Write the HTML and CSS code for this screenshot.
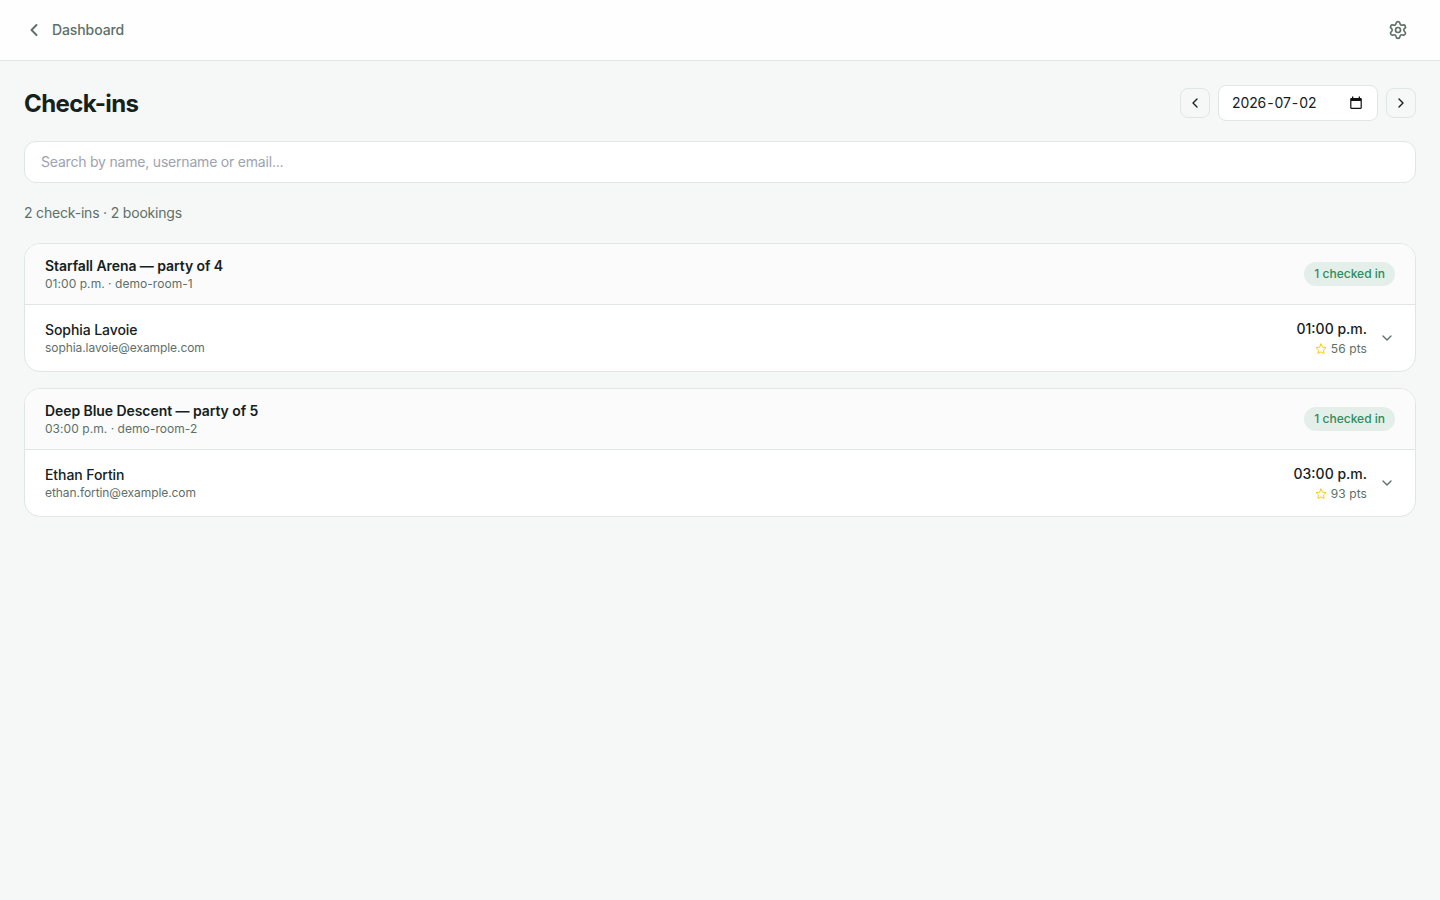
FILE: index.html
```html
<!DOCTYPE html>
<html lang="en">
<head>
	<meta charset="utf-8">
	<meta name="viewport" content="width=device-width,initial-scale=1.0">
	<title>Check-ins</title>
	<link rel="stylesheet" href="styles.css">
</head>
<body>
	<!-- top bar -->
	<header class="topbar">
		<a class="back" href="#">
			<svg width="20" height="20" viewBox="0 0 24 24"><path d="m15 18-6-6 6-6"/></svg>
			<span>Dashboard</span>
		</a>
		<button class="settings" aria-label="Settings">
			<svg width="20" height="20" viewBox="0 0 24 24"><path d="M9.671 4.136a2.34 2.34 0 0 1 4.659 0 2.34 2.34 0 0 0 3.319 1.915 2.34 2.34 0 0 1 2.33 4.033 2.34 2.34 0 0 0 0 3.831 2.34 2.34 0 0 1-2.33 4.033 2.34 2.34 0 0 0-3.319 1.915 2.34 2.34 0 0 1-4.659 0 2.34 2.34 0 0 0-3.32-1.915 2.34 2.34 0 0 1-2.33-4.033 2.34 2.34 0 0 0 0-3.831A2.34 2.34 0 0 1 6.35 6.051a2.34 2.34 0 0 0 3.319-1.915"/><circle cx="12" cy="12" r="3"/></svg>
		</button>
	</header>
	<main>
		<!-- title, date picker -->
		<div class="title-row">
			<h1>Check-ins</h1>
			<div class="date-nav">
				<button class="date-step" aria-label="Previous day">
					<svg width="16" height="16" viewBox="0 0 24 24"><path d="m15 18-6-6 6-6"/></svg>
				</button>
				<button class="date-field">
					<span class="date-value"><span>2026</span><span>-</span><span>07</span><span>-</span><span>02</span></span>
					<svg class="calendar" width="14" height="14" viewBox="0 0 14 14"><path d="M3 .5h1.3V2h5.4V.5H11V2h.6c.7 0 1.2.5 1.2 1.2v8.6c0 .7-.5 1.2-1.2 1.2H2.4c-.7 0-1.2-.5-1.2-1.2V3.2C1.2 2.5 1.7 2 2.4 2H3zM2.4 5v6.800h9.200V5z"/></svg>
				</button>
				<button class="date-step" aria-label="Next day">
					<svg width="16" height="16" viewBox="0 0 24 24"><path d="m9 18 6-6-6-6"/></svg>
				</button>
			</div>
		</div>
		<input class="search" type="text" placeholder="Search by name, username or email...">
		<p class="summary">2 check-ins · 2 bookings</p>

		<!-- bookings -->
		<section class="booking">
			<div class="booking-head">
				<div>
					<h2>Starfall Arena — party of 4</h2>
					<p class="sub">01:00 p.m. · demo-room-1</p>
				</div>
				<span class="badge">1 checked in</span>
			</div>
			<div class="guest">
				<div>
					<p class="name">Sophia Lavoie</p>
					<p class="sub email">sophia.lavoie@example.com</p>
				</div>
				<div class="guest-side">
					<div class="guest-info">
						<p class="time">01:00 p.m.</p>
						<p class="points">
							<svg class="star" width="12" height="12" viewBox="0 0 24 24"><path d="m12 2 3.090 6.260L22 9.270l-5 4.870 1.180 6.880L12 17.770l-6.180 3.250L7 14.140 2 9.270l6.910-1.010z"/></svg>
							<span>56 pts</span>
						</p>
					</div>
					<svg class="chevron" width="16" height="16" viewBox="0 0 24 24"><path d="m6 9 6 6 6-6"/></svg>
				</div>
			</div>
		</section>
		<section class="booking">
			<div class="booking-head">
				<div>
					<h2>Deep Blue Descent — party of 5</h2>
					<p class="sub">03:00 p.m. · demo-room-2</p>
				</div>
				<span class="badge">1 checked in</span>
			</div>
			<div class="guest">
				<div>
					<p class="name">Ethan Fortin</p>
					<p class="sub email">ethan.fortin@example.com</p>
				</div>
				<div class="guest-side">
					<div class="guest-info">
						<p class="time">03:00 p.m.</p>
						<p class="points">
							<svg class="star" width="12" height="12" viewBox="0 0 24 24"><path d="m12 2 3.090 6.260L22 9.270l-5 4.870 1.180 6.880L12 17.770l-6.180 3.250L7 14.140 2 9.270l6.910-1.010z"/></svg>
							<span>93 pts</span>
						</p>
					</div>
					<svg class="chevron" width="16" height="16" viewBox="0 0 24 24"><path d="m6 9 6 6 6-6"/></svg>
				</div>
			</div>
		</section>
	</main>
</body>
</html>
```

FILE: styles.css
```css
* {
	margin: 0;
	padding: 0;
	box-sizing: border-box;
}
body {
	font-family: Inter, sans-serif;
	font-size: 14px;
	line-height: 20px;
	color: #14211c;
	background: #f5f8f7;
	min-height: 100vh;
	-webkit-font-smoothing: antialiased;
}
svg {
	display: block;
	flex: none;
	fill: none;
	stroke: currentColor;
	stroke-width: 2;
	stroke-linecap: round;
	stroke-linejoin: round;
}
button {
	font: inherit;
	color: inherit;
	border: 0;
	background: none;
}

.topbar {
	display: flex;
	align-items: center;
	justify-content: space-between;
	height: 61px;
	padding: 0 32px 0 24px;
	background: #fefefe;
	border-bottom: 1px solid #dfe6e3;
	color: #5d7068;
}
.back {
	display: flex;
	align-items: center;
	gap: 8px;
	color: inherit;
	font-weight: 500;
	letter-spacing: -0.1px;
	text-decoration: none;
}
.back svg {
	stroke-width: 2.3;
}

main {
	padding: 24px;
}
.title-row {
	display: flex;
	align-items: center;
	justify-content: space-between;
	height: 36px;
	margin-bottom: 20px;
}
h1 {
	padding-top: 2px;
	font-size: 24px;
	line-height: 32px;
	font-weight: 700;
	letter-spacing: -0.6px;
}
.date-nav {
	display: flex;
	align-items: center;
	gap: 8px;
}
.date-step {
	display: flex;
	align-items: center;
	justify-content: center;
	width: 30px;
	height: 30px;
	border: 1px solid #dfe6e3;
	border-radius: 8px;
}
.date-field {
	display: flex;
	align-items: center;
	justify-content: space-between;
	width: 160px;
	height: 36px;
	padding: 0 14px 0 13px;
	background: #fff;
	border: 1px solid #dfe6e3;
	border-radius: 8px;
}
.date-value {
	display: flex;
	gap: 1px;
	letter-spacing: -0.1px;
}
.calendar {
	fill: #111;
	stroke: none;
	fill-rule: evenodd;
}

.search {
	display: block;
	width: 100%;
	height: 42px;
	padding: 0 16px 1px;
	font: inherit;
	letter-spacing: -0.2px;
	color: inherit;
	background: #fff;
	border: 1px solid #dfe6e3;
	border-radius: 12px;
}
.search::placeholder {
	color: #9ca3af;
}
.summary {
	margin: 20px 0;
	letter-spacing: -0.19px;
	color: #5d7068;
}

.booking {
	background: #fff;
	border: 1px solid #dfe6e3;
	border-radius: 16px;
	overflow: hidden;
}
.booking + .booking {
	margin-top: 16px;
}
.booking-head {
	display: flex;
	align-items: center;
	justify-content: space-between;
	padding: 12px 20px;
	background: #fbfbfb;
	border-bottom: 1px solid #dfe6e3;
}
h2 {
	font-size: 14px;
	font-weight: 600;
	letter-spacing: -0.07px;
}
.sub {
	font-size: 12px;
	line-height: 16px;
	letter-spacing: 0.05px;
	color: #5d7068;
}
.email {
	letter-spacing: -0.07px;
}
.badge {
	padding: 4px 10px;
	font-size: 12px;
	line-height: 16px;
	font-weight: 500;
	color: #2e8b5e;
	background: #e4efea;
	border-radius: 12px;
}
.guest {
	display: flex;
	align-items: center;
	justify-content: space-between;
	padding: 14px 20px;
}
.name,
.time {
	font-weight: 500;
}
.name {
	letter-spacing: -0.08px;
}
.guest-side {
	display: flex;
	align-items: center;
	gap: 12px;
}
.guest-info {
	text-align: right;
}
.points {
	display: flex;
	align-items: center;
	justify-content: flex-end;
	gap: 4px;
	margin-top: 2px;
	font-size: 12px;
	line-height: 16px;
	letter-spacing: 0.1px;
	color: #5d7068;
}
.star {
	color: #facc15;
}
.chevron {
	color: #5d7068;
}
```
